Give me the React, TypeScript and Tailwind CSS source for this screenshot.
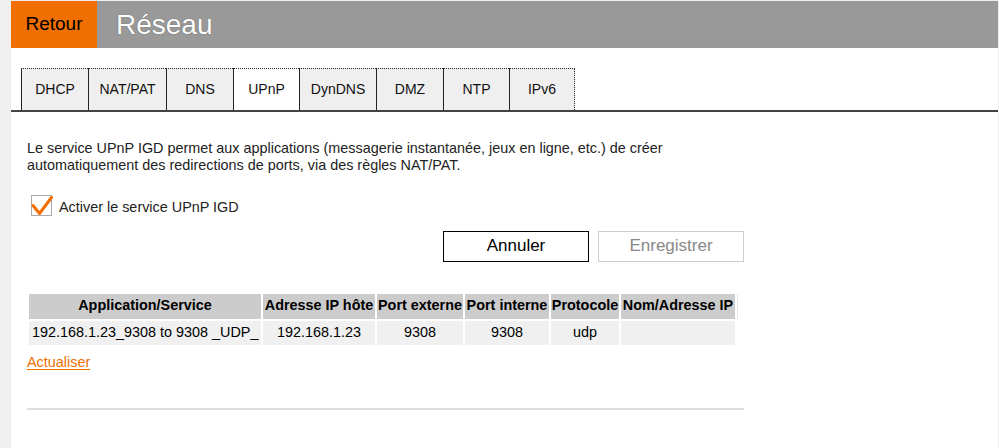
import React from 'react';

const tabs = [
  { label: 'DHCP', w: 'w-[67px]' },
  { label: 'NAT/PAT', w: 'w-[78px]' },
  { label: 'DNS', w: 'w-[67px]' },
  { label: 'UPnP', w: 'w-[66px]', active: true },
  { label: 'DynDNS', w: 'w-[77px]' },
  { label: 'DMZ', w: 'w-[67px]' },
  { label: 'NTP', w: 'w-[66px]' },
  { label: 'IPv6', w: 'w-[66px]', last: true },
];

const columns = [
  { label: 'Application/Service', w: 'w-[232px]' },
  { label: 'Adresse IP hôte', w: 'w-[112px]' },
  { label: 'Port externe', w: 'w-[86px]' },
  { label: 'Port interne', w: 'w-[84px]' },
  { label: 'Protocole', w: 'w-[68px]' },
  { label: 'Nom/Adresse IP', w: 'w-[114px]' },
];

const row = ['192.168.1.23_9308 to 9308 _UDP_', '192.168.1.23', '9308', '9308', 'udp', ''];

export default function App() {
  return (
    <div className="flex h-[448px] w-[999px] bg-[#efefef] pt-px font-['Liberation_Sans',Arial,sans-serif] text-[14.4px] text-[#222] overflow-hidden">
      <div className="w-[11px] shrink-0" />
      <div className="flex w-[987px] flex-col bg-white">
        {/* header */}
        <div className="flex h-[47px] items-center bg-[#999999]">
          <div className="flex h-full w-[86px] items-center justify-center bg-[#f16e00] text-[19px] text-black">
            Retour
          </div>
          <h1 className="ml-[19px] text-[28px] font-normal text-white [text-shadow:0_0_1px_rgba(0,0,0,0.5)]">
            Réseau
          </h1>
        </div>

        {/* tabs */}
        <div className="mt-[20px] flex pl-[10px]">
          {tabs.map(t => (
            <div
              key={t.label}
              className={`flex h-[42px] items-center justify-center border-l border-t border-[#222] text-[14px] text-[#111] [border-top-style:dotted] ${t.w} ${t.active ? 'bg-white' : 'bg-[#efefef]'} ${t.last ? 'border-r [border-right-style:dotted]' : ''}`}
            >
              {t.label}
            </div>
          ))}
        </div>
        <div className="h-[2px] bg-[#444]" />

        {/* content */}
        <div className="px-[16px]">
          <p className="mt-[28px] leading-[17px]">
            Le service UPnP IGD permet aux applications (messagerie instantanée, jeux en ligne, etc.) de créer
            <br />
            automatiquement des redirections de ports, via des règles NAT/PAT.
          </p>

          <label className="mt-[19px] flex items-center">
            <span className="relative ml-[4px] h-[21px] w-[21px] border border-[#aaa] bg-white">
              <svg className="absolute -left-[1px] -top-[1px]" width="24" height="22" viewBox="0 0 24 22">
                <path d="M2 10.5 L8.5 18.5 L20.5 2.5" fill="none" stroke="#f16e00" strokeWidth="3" strokeLinecap="round" strokeLinejoin="round" />
              </svg>
            </span>
            <span className="ml-[7px] mt-[4px]">Activer le service UPnP IGD</span>
          </label>

          <div className="mt-[12px] flex justify-start pl-[416px] gap-[9px]">
            <button className="h-[31px] w-[146px] border border-black bg-white text-[17px] text-black">
              Annuler
            </button>
            <button className="h-[31px] w-[146px] border border-[#ccc] bg-white text-[17px] text-[#888]">
              Enregistrer
            </button>
          </div>

          <table className="mt-[30px] border-separate border-spacing-[2px]">
            <thead>
              <tr>
                {columns.map(c => (
                  <th key={c.label} className={`h-[25px] bg-[#cccccc] p-0 text-center font-bold text-black ${c.w}`}>
                    {c.label}
                  </th>
                ))}
                <th className="w-px bg-[#e6e6e6] p-0" />
              </tr>
            </thead>
            <tbody>
              <tr>
                {row.map((v, i) => (
                  <td
                    key={i}
                    className={`h-[24px] bg-[#f0f0f0] p-0 text-black ${i === 0 ? 'pl-[3px] text-left' : 'text-center'}`}
                  >
                    {v}
                  </td>
                ))}
                <td className="w-px p-0" />
              </tr>
            </tbody>
          </table>

          <a href="#" className="mt-[5px] block w-fit text-[#f16e00] underline underline-offset-2">
            Actualiser
          </a>

          <div className="mt-[35px] h-[2px] w-[717px] bg-[#dddddd]" />
        </div>
      </div>
      <div className="w-px shrink-0" />
    </div>
  );
}
